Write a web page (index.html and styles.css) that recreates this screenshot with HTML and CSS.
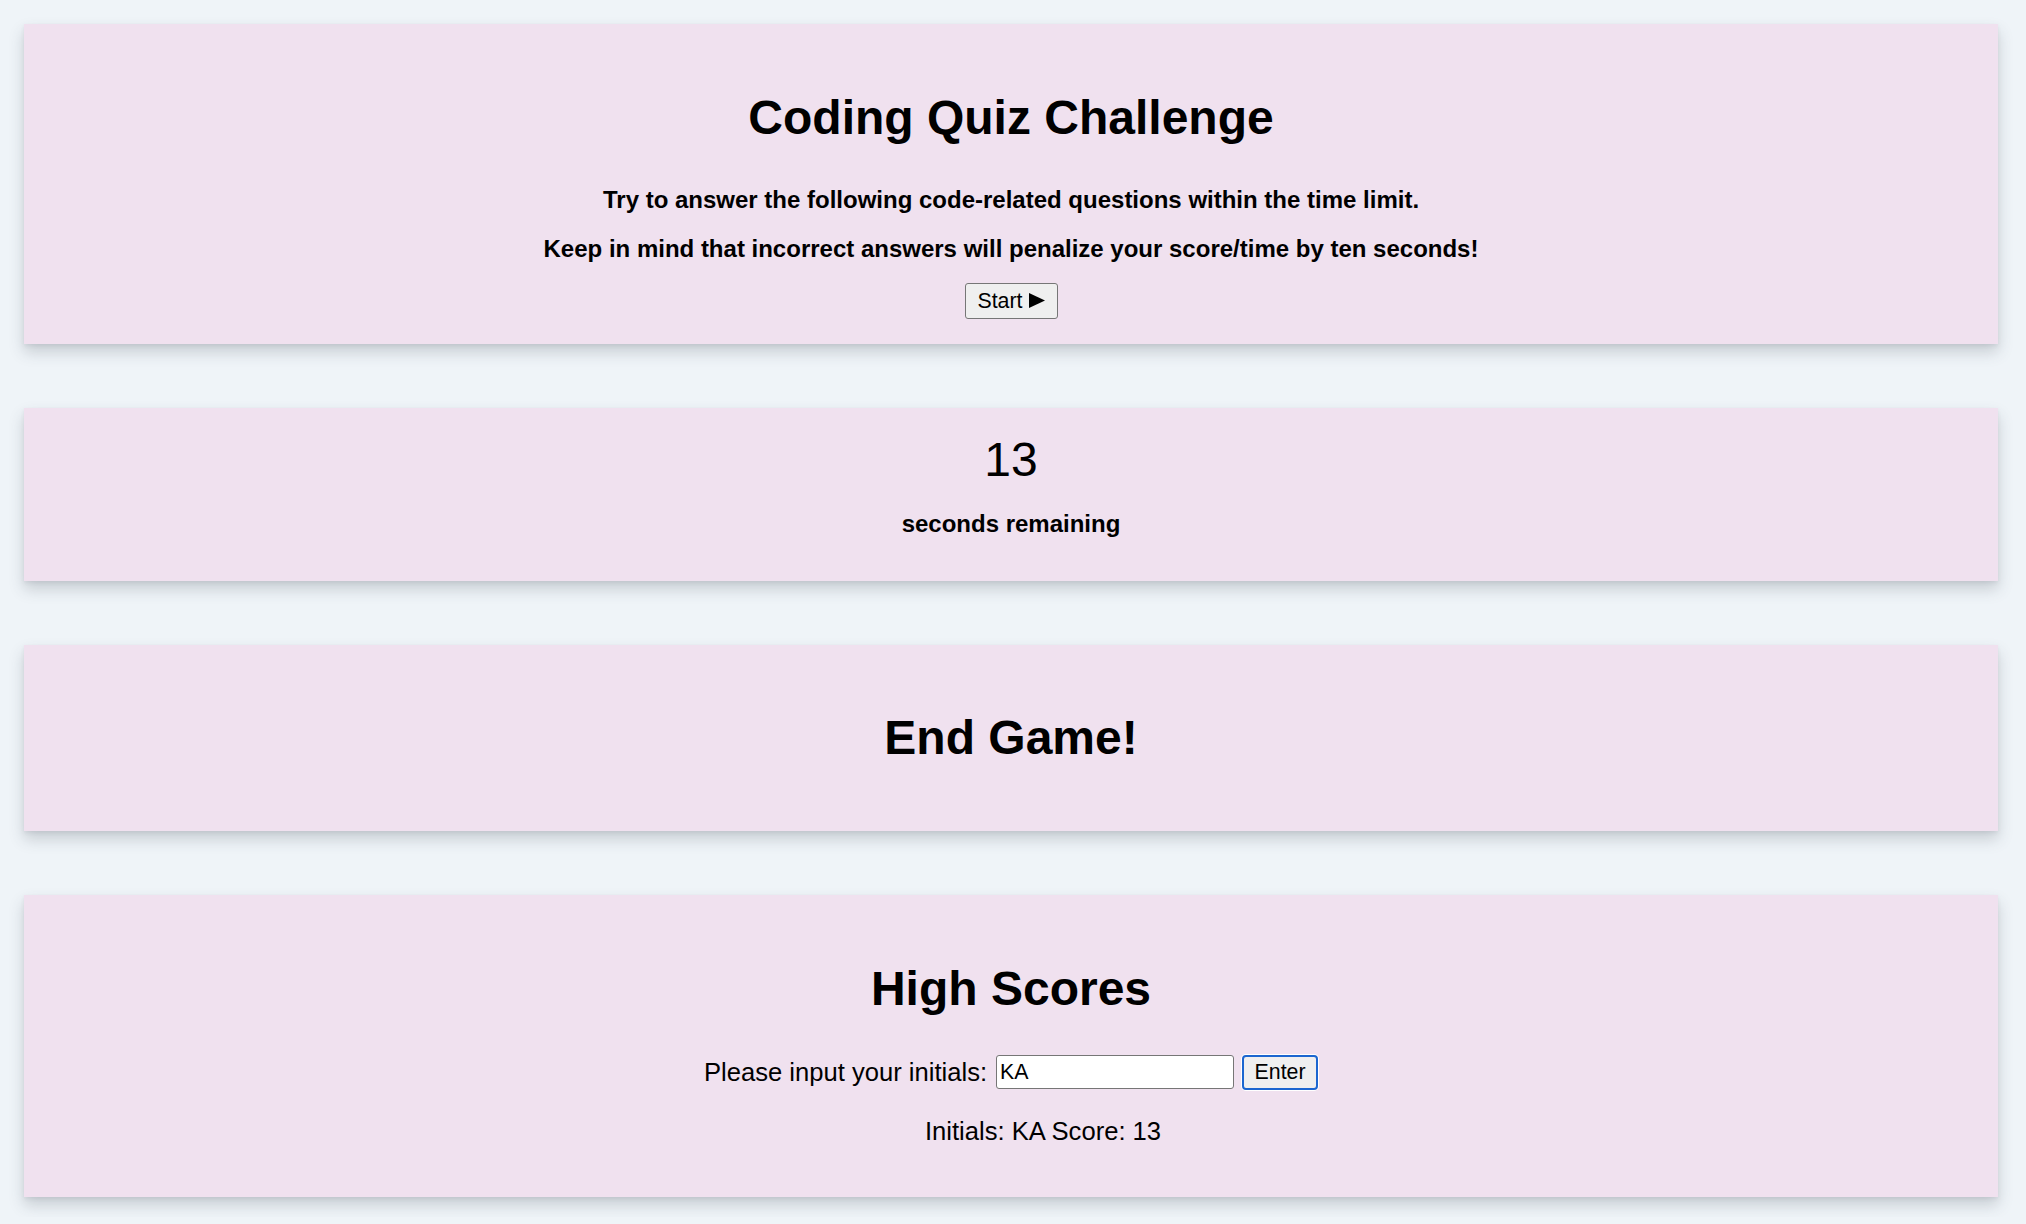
FILE: index.html
```html
<!DOCTYPE html>
<html lang="en">
<head>
<meta charset="utf-8">
<title>Coding Quiz Challenge</title>
<link rel="stylesheet" href="styles.css">
</head>
<body>
<main class="page">
  <section class="card card-intro">
    <h1 class="title">Coding Quiz Challenge</h1>
    <p class="lead lead-first">Try to answer the following code-related questions within the time limit.</p>
    <p class="lead lead-second">Keep in mind that incorrect answers will penalize your score/time by ten seconds!</p>
    <button class="btn btn-start" type="button">Start <svg class="play" width="16" height="15" viewBox="0 0 16 15"><polygon points="0,0 16,7.5 0,15" fill="#000"/></svg></button>
  </section>

  <section class="card card-timer">
    <div class="count">13</div>
    <p class="lead lead-timer">seconds remaining</p>
  </section>

  <section class="card card-end">
    <h2 class="title">End Game!</h2>
  </section>

  <section class="card card-scores">
    <h2 class="title">High Scores</h2>
    <div class="entry">
      <label class="entry-label" for="initials">Please input your initials:</label>
      <input class="entry-input" id="initials" type="text" value="KA">
      <button class="btn btn-enter" type="button">Enter</button>
    </div>
    <ul class="score-list">
      <li class="score-item">Initials: KA Score: 13</li>
    </ul>
  </section>
</main>
</body>
</html>
```

FILE: styles.css
```css
html, body {
  margin: 0;
  padding: 0;
}

body {
  background: #eff4f8;
  color: #000;
  font-family: "Liberation Sans", Arial, Helvetica, sans-serif;
  font-size: 25.6px;
}

.page {
  display: flex;
  flex-direction: column;
  gap: 64px;
  padding: 24px 28px 20px 24px;
}

.card {
  background: #f0e1ef;
  box-shadow: 0 8px 14px rgba(60, 70, 80, 0.22), 0 2px 4px rgba(60, 70, 80, 0.08);
  display: flex;
  flex-direction: column;
  align-items: center;
  text-align: center;
}

.title {
  margin: 0;
  font-size: 48px;
  font-weight: bold;
  line-height: 56px;
}

.lead {
  margin: 0;
  font-size: 24px;
  font-weight: bold;
  line-height: 28px;
}

.card-intro {
  padding: 66px 0 25px;
}

.card-intro .title {
  margin-bottom: 40px;
}

.lead-second {
  margin-top: 21px;
  margin-bottom: 20px;
}

.btn {
  font-family: "Liberation Sans", Arial, Helvetica, sans-serif;
  font-size: 21.33px;
  color: #000;
  background: #efefef;
  border: 1px solid #767676;
  border-radius: 3px;
  box-sizing: border-box;
  display: inline-flex;
  align-items: center;
  justify-content: center;
  padding: 0;
}

.btn-start {
  width: 93px;
  height: 36px;
  gap: 6px;
}

.play {
  display: block;
  margin-top: -2px;
}

.card-timer {
  padding: 24px 0 43px;
}

.count {
  font-size: 48px;
  line-height: 56px;
}

.lead-timer {
  margin-top: 22px;
}

.card-end {
  padding: 65px 0 65px;
}

.card-scores {
  padding: 66px 0 51px;
}

.entry {
  margin-top: 37px;
  display: flex;
  align-items: center;
  height: 36px;
}

.entry-label {
  line-height: 30px;
  margin-right: 9px;
}

.entry-input {
  box-sizing: border-box;
  width: 238px;
  height: 34px;
  border: 1px solid #767676;
  border-radius: 3px;
  background: #fff;
  font-family: "Liberation Sans", Arial, Helvetica, sans-serif;
  font-size: 21.33px;
  color: #000;
  padding: 0 3px;
  margin: 0 8px 0 0;
}

.btn-enter {
  width: 76px;
  height: 35px;
  border: 2px solid #1b66d0;
  border-radius: 4px;
  box-shadow: 0 0 0 1px #ffffff;
}

.score-list {
  list-style: none;
  margin: 26px 0 0;
  padding: 0 0 0 64px;
}

.score-item {
  line-height: 30px;
}
```
